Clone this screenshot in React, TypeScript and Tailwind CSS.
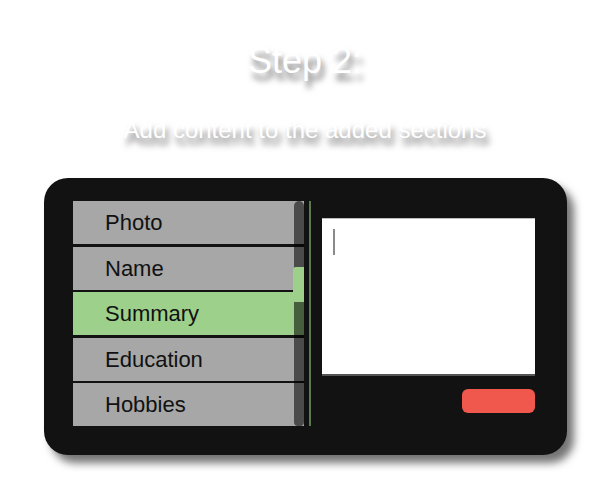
import React from "react";

const sections = ["Photo", "Name", "Summary", "Education", "Hobbies"];
const active = "Summary";

export default function App() {
  return (
    <div
      className="w-[610px] h-[489px] bg-white overflow-hidden"
      style={{ fontFamily: '"Liberation Sans", Arial, sans-serif' }}
    >
      {/* Heading */}
      <div className="flex flex-col items-center text-white [text-shadow:3px_7px_6px_rgba(0,0,0,0.55)]">
        <h1 className="mt-[40px] text-[36px] leading-[42px]">Step 2:</h1>
        <p className="mt-[35px] text-[24px] leading-[26px]">
          Add content to the added sections
        </p>
      </div>

      {/* Editor card */}
      <div className="ml-[44px] mt-[35px] w-[523px] h-[277px] rounded-[24px] bg-[#121212] shadow-[7px_8px_9px_rgba(0,0,0,0.55)] flex items-start pl-[29px] pt-[23px]">
        <div className="relative w-[231px] flex flex-col gap-[2.5px]">
          {sections.map((s) => (
            <div
              key={s}
              className={
                "h-[43px] pl-[32px] flex items-center text-[22px] text-[#111] " +
                (s === active ? "bg-[#9dd08a]" : "bg-[#a6a7a6]")
              }
            >
              {s}
            </div>
          ))}
          {/* scrollbar */}
          <div className="absolute right-0 top-0 bottom-0 w-[10px] rounded-t-[5px] rounded-b-[4px] bg-black/55">
            <div className="absolute left-[-1px] right-0 top-[66px] h-[35px] rounded-tl-[3px] rounded-bl-[2px] bg-[#9dd08a]" />
          </div>
        </div>
        <div className="ml-[5px] w-[2px] h-[225px] bg-[#5b7a52]" />
        <div className="ml-[11px] pt-[17px] flex flex-col items-end">
          <div className="relative w-[213px] h-[158px] bg-white border-t border-t-[#bdbdbd] border-b-[2px] border-b-[#555]">
            <div className="absolute left-[11px] top-[10px] w-[2px] h-[26px] bg-[#8a8a8a]" />
          </div>
          <button className="mt-[13px] w-[73px] h-[24px] rounded-[6px] bg-[#f0584d]" />
        </div>
      </div>
    </div>
  );
}
